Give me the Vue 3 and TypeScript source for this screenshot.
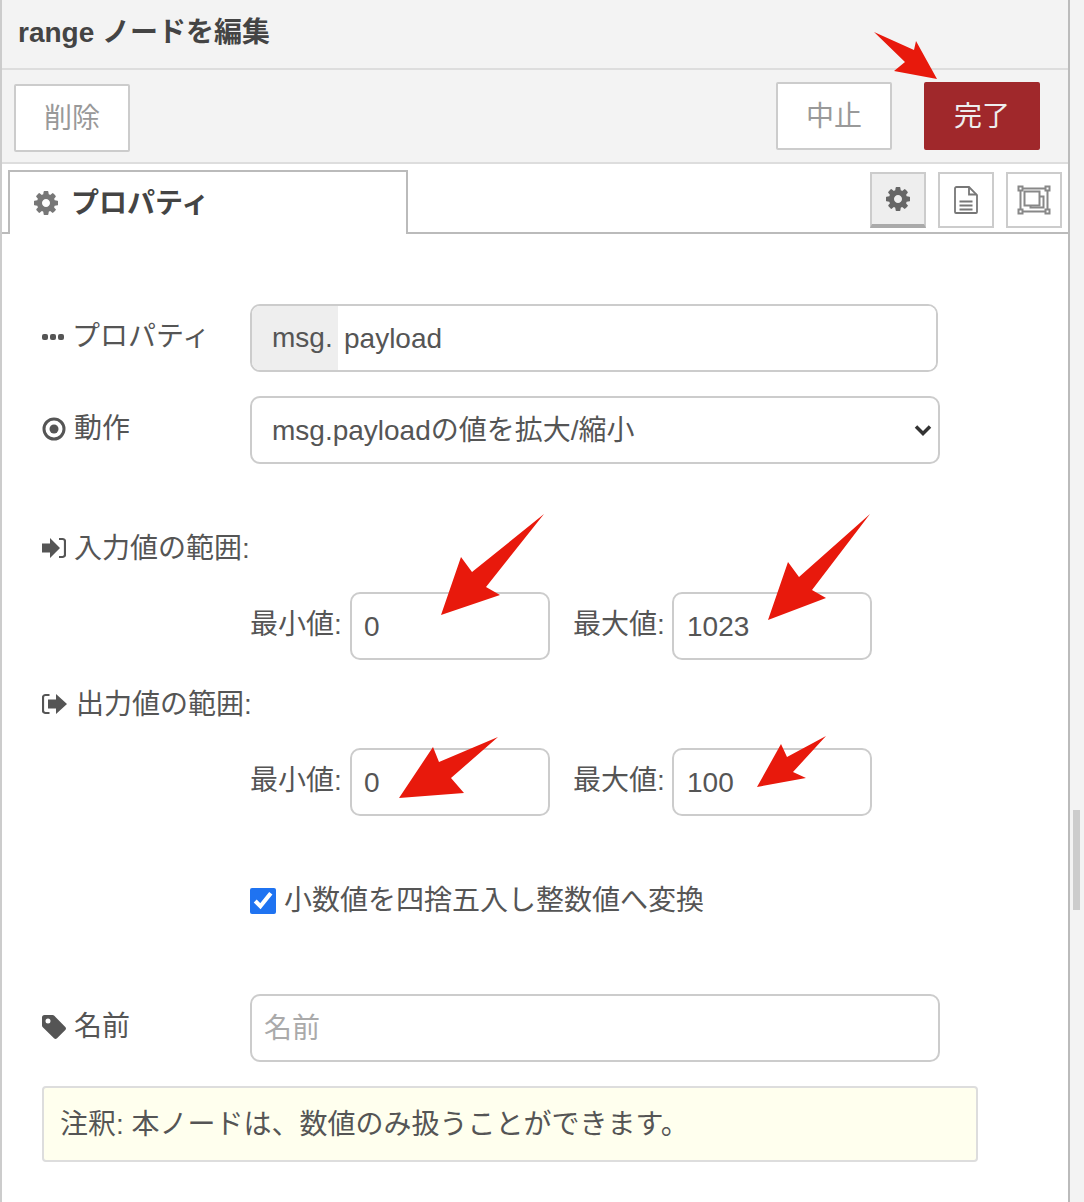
<script setup lang="ts">
const gear = "M1024 768q0-106-75-181t-181-75-181 75-75 181 75 181 181 75 181-75 75-181zm512-109v222q0 12-8 23t-20 13l-185 28q-19 54-39 91 35 50 107 138 10 12 10 25t-9 23q-27 37-99 108t-94 71q-12 0-26-9l-138-108q-44 23-91 38-16 136-29 186-7 28-36 28h-222q-14 0-24.5-8.5t-11.5-21.5l-28-184q-49-16-90-37l-141 107q-10 9-25 9-14 0-25-11-126-114-165-168-7-10-7-23 0-12 8-23 15-21 51-66.5t54-70.5q-27-50-41-99l-183-27q-13-2-21-12.5t-8-23.5v-222q0-12 8-23t19-13l186-28q14-46 39-92-40-57-107-138-10-12-10-24 0-10 9-23 26-36 98.5-107.5t94.5-71.5q13 0 26 10l138 107q44-23 91-38 16-136 29-186 7-28 36-28h222q14 0 24.5 8.5t11.5 21.5l28 184q49 16 90 37l142-107q9-9 24-9 13 0 25 10 129 119 165 170 7 8 7 22 0 12-8 23-15 21-51 66.5t-54 70.5q26 50 41 98l183 28q13 2 21 12.5t8 23.5z";
const arrows: string[] = [
  "874,32 914,50 916,41 937,79 894,71 905,62",
  "544,514 472,572 461,557 441,615 500,595 486,587",
  "870,514 799,577 788,562 768,620 826,598 812,590",
  "498,737 439,762 433,747 399,798 464,793 451,778",
  "826,736 787,757 781,744 757,787 806,778 793,772",
];
</script>

<template>
  <div class="page">
    <div class="panel">
      <header class="title">range ノードを編集</header>
      <div class="toolbar">
        <button class="btn del">削除</button>
        <div class="actions">
          <button class="btn">中止</button>
          <button class="btn primary">完了</button>
        </div>
      </div>
      <div class="tabs">
        <div class="tab">
          <svg class="tab-gear" viewBox="0 0 1536 1536"><path :d="gear" /></svg>
          <span class="tab-text">プロパティ</span>
        </div>
        <div class="tab-btns">
          <div class="tbtn on">
            <svg class="btn-gear" viewBox="0 0 1536 1536"><path :d="gear" /></svg>
          </div>
          <div class="tbtn">
            <svg width="24" height="28" viewBox="0 0 24 28" fill="none" stroke="#777" stroke-width="1.800">
              <path d="M2.500 1H15L23 9V26a1 1 0 0 1-1 1H2a1 1 0 0 1-1-1V2.500A1.500 1.500 0 0 1 2.500 1Z" />
              <path d="M15 1.500V8.500H22.500" />
              <path d="M5.500 15.500H18.500M5.500 19.500H18.500M5.500 23.500H18.500" />
            </svg>
          </div>
          <div class="tbtn">
            <svg width="34" height="30" viewBox="0 0 34 30" fill="none" stroke="#888" stroke-width="2">
              <rect x="1.500" y="1.500" width="4" height="4" />
              <rect x="28.500" y="1.500" width="4" height="4" />
              <rect x="1.500" y="24.500" width="4" height="4" />
              <rect x="28.500" y="24.500" width="4" height="4" />
              <path d="M5.500 3.500H28.500M5.500 26.500H28.500M3.500 5.500V24.500M30.500 5.500V24.500" />
              <rect x="7.500" y="6.500" width="15" height="14" />
              <path d="M22.500 11.500H26.500V22.500H13.500V20.500" />
            </svg>
          </div>
        </div>
      </div>

      <form class="form" @submit.prevent>
        <div class="row">
          <label class="lab">
            <svg class="ic" width="22" height="24" viewBox="0 0 22 24" fill="#555">
              <rect x="0" y="9" width="6" height="6" rx="2" />
              <rect x="8" y="9" width="6" height="6" rx="2" />
              <rect x="16" y="9" width="6" height="6" rx="2" />
            </svg>
            <span>プロパティ</span>
          </label>
          <div class="typed">
            <span class="prefix">msg.</span>
            <input class="typed-in" value="payload" />
          </div>
        </div>

        <div class="row gap24">
          <label class="lab">
            <svg class="ic" width="24" height="24" viewBox="0 0 24 24">
              <circle cx="12" cy="12" r="10" fill="none" stroke="#555" stroke-width="3" />
              <circle cx="12" cy="12" r="4.500" fill="#555" />
            </svg>
            <span>動作</span>
          </label>
          <div class="select-wrap">
            <select class="select">
              <option>msg.payloadの値を拡大/縮小</option>
            </select>
            <svg class="chev" width="18" height="12" viewBox="0 0 18 12" fill="none" stroke="#333" stroke-width="3.500">
              <path d="M2 2.500L9 9.500L16 2.500" />
            </svg>
          </div>
        </div>

        <div class="head gap64">
          <svg class="ic" width="24" height="24" viewBox="0 0 24 24" fill="#555">
            <path d="M0 7.500H8V2L18 12L8 22V16.500H0Z" />
            <path d="M17 3H20.500a2.500 2.500 0 0 1 2.500 2.500V18.500a2.500 2.500 0 0 1-2.500 2.500H17" fill="none" stroke="#555" stroke-width="2.200" />
          </svg>
          <span>入力値の範囲:</span>
        </div>
        <div class="pair gap24">
          <span class="mini">最小値:</span>
          <input class="num" value="0" />
          <span class="mini second">最大値:</span>
          <input class="num right" value="1023" />
        </div>

        <div class="head gap24">
          <svg class="ic out" width="26" height="24" viewBox="0 0 26 24" fill="#555">
            <path d="M7.500 3H3.500A2.500 2.500 0 0 0 1 5.500V18.500A2.500 2.500 0 0 0 3.500 21H7.500" fill="none" stroke="#555" stroke-width="2.200" />
            <path d="M6 7.500H14V2L25 12L14 22V16.500H6Z" />
          </svg>
          <span>出力値の範囲:</span>
        </div>
        <div class="pair gap24">
          <span class="mini">最小値:</span>
          <input class="num" value="0" />
          <span class="mini second">最大値:</span>
          <input class="num right" value="100" />
        </div>

        <label class="check gap64">
          <input class="cb" type="checkbox" checked />
          <span>小数値を四捨五入し整数値へ変換</span>
        </label>

        <div class="row gap74">
          <label class="lab">
            <svg class="ic" width="24" height="24" viewBox="0 0 24 24" fill="#555">
              <path fill-rule="evenodd" d="M2.500 0H10.500a2.500 2.500 0 0 1 1.800.8L23.300 12a2.200 2.200 0 0 1 0 3L15 23.300a2.200 2.200 0 0 1-3 0L.8 12.300A2.500 2.500 0 0 1 0 10.500V2.500A2.500 2.500 0 0 1 2.500 0ZM6 3.500a2.500 2.500 0 1 0 0 5a2.500 2.500 0 0 0 0-5Z" />
            </svg>
            <span>名前</span>
          </label>
          <input class="name" placeholder="名前" />
        </div>

        <div class="tip">注釈: 本ノードは、数値のみ扱うことができます。</div>
      </form>
    </div>
    <div class="rail"><div class="thumb"></div></div>
    <svg class="arrows" width="1084" height="1202" viewBox="0 0 1084 1202">
      <polygon v-for="p in arrows" :key="p" :points="p" fill="#e8190c" />
    </svg>
  </div>
</template>

<style>
html, body { margin: 0; background: #fff; }
</style>

<style scoped>
.page {
  position: relative;
  width: 1084px;
  height: 1202px;
  display: flex;
  overflow: hidden;
  background: #f3f3f3;
  color: #555;
  font-family: "Liberation Sans", "Noto Sans CJK JP", sans-serif;
  font-size: 28px;
}
.panel {
  width: 1070px;
  box-sizing: border-box;
  border-left: 2px solid #ccc;
  border-right: 2px solid #bbb;
  background: #fff;
  display: flex;
  flex-direction: column;
}
.title {
  height: 70px;
  box-sizing: border-box;
  padding: 13px 0 0 16px;
  line-height: 40px;
  background: #f3f3f3;
  border-bottom: 2px solid #ddd;
  font-weight: 700;
  color: #444;
}
.toolbar {
  height: 94px;
  box-sizing: border-box;
  background: #f3f3f3;
  border-bottom: 2px solid #ddd;
  display: flex;
  justify-content: space-between;
  padding: 12px 28px 0 12px;
}
.actions { display: flex; gap: 32px; }
.btn {
  width: 116px;
  height: 68px;
  box-sizing: border-box;
  border: 2px solid #ccc;
  border-radius: 2px;
  background: #fff;
  color: #999;
  font: inherit;
  padding: 0 0 4px;
}
.del { margin-top: 2px; }
.primary {
  background: #a0282b;
  border-color: #a0282b;
  color: #eee;
}
.tabs {
  height: 70px;
  box-sizing: border-box;
  border-bottom: 2px solid #bbb;
  display: flex;
  justify-content: space-between;
  padding: 6px 6px 0 6px;
}
.tab {
  width: 400px;
  height: 64px;
  box-sizing: border-box;
  border: 2px solid #bbb;
  border-bottom: 0;
  background: #fff;
  display: flex;
  align-items: center;
  padding-left: 24px;
  gap: 13px;
  font-weight: 700;
  color: #444;
}
.tab-text { margin-top: -4px; }
.tab-gear { width: 24px; height: 24px; fill: #777; margin-top: -1px; }
.tab-btns { display: flex; gap: 12px; padding-top: 2px; }
.tbtn {
  width: 56px;
  height: 56px;
  box-sizing: border-box;
  border: 2px solid #ccc;
  background: #fff;
  display: flex;
  align-items: center;
  justify-content: center;
}
.tbtn.on {
  background: #eee;
  border-bottom: 4px solid #aaa;
}
.btn-gear { width: 24px; height: 24px; fill: #666; }

.form {
  padding: 70px 0 0 40px;
  display: flex;
  flex-direction: column;
  background: #fff;
  flex: 1;
}
.gap24 { margin-top: 24px; }
.gap64 { margin-top: 64px; }
.gap74 { margin-top: 74px; }
.row { display: flex; align-items: center; height: 68px; }
.lab {
  width: 208px;
  display: flex;
  align-items: center;
  line-height: 40px;
  margin-top: -2px;
}
.ic { flex: none; margin-right: 8px; }
.typed {
  width: 688px;
  height: 68px;
  box-sizing: border-box;
  border: 2px solid #ccc;
  border-radius: 10px;
  display: flex;
  overflow: hidden;
}
.prefix {
  width: 86px;
  flex: none;
  background: #eee;
  color: #555;
  box-sizing: border-box;
  padding-left: 20px;
  line-height: 64px;
}
.typed-in {
  flex: 1;
  min-width: 0;
  border: 0;
  outline: 0;
  padding: 2px 0 0 6px;
  font: inherit;
  color: #555;
}
.select-wrap { position: relative; width: 690px; height: 68px; }
.select {
  width: 100%;
  height: 100%;
  box-sizing: border-box;
  appearance: none;
  border: 2px solid #ccc;
  border-radius: 10px;
  background: #fff;
  padding: 0 0 0 20px;
  font: inherit;
  color: #555;
  outline: 0;
}
.chev { position: absolute; right: 8px; top: 28px; }
.head {
  height: 40px;
  line-height: 40px;
  display: flex;
  align-items: center;
}
.head span { padding-top: 2px; }
.pair {
  display: flex;
  align-items: center;
  height: 68px;
  padding-left: 208px;
}
.mini { width: 100px; line-height: 40px; margin-top: -2px; white-space: nowrap; }
.mini.second { width: 99px; margin-left: 23px; }
.num {
  width: 200px;
  height: 68px;
  box-sizing: border-box;
  border: 2px solid #ccc;
  border-radius: 10px;
  padding: 2px 0 0 12px;
  font: inherit;
  color: #555;
  outline: 0;
}
.num.right { padding-left: 13px; }
.check {
  height: 40px;
  line-height: 40px;
  display: flex;
  align-items: center;
  padding-left: 208px;
  gap: 8px;
}
.check span { padding-top: 2px; }
.cb {
  width: 26px;
  height: 26px;
  margin: 2px 0 0;
  accent-color: #1f73f1;
}
.name {
  width: 690px;
  height: 68px;
  box-sizing: border-box;
  border: 2px solid #ccc;
  border-radius: 10px;
  padding: 2px 0 0 12px;
  font: inherit;
  color: #555;
  outline: 0;
}
.name::placeholder { color: #aaa; opacity: 1; }
.tip {
  margin-top: 24px;
  width: 936px;
  height: 76px;
  box-sizing: border-box;
  border: 2px solid #ddd;
  border-radius: 4px;
  background: #ffffee;
  padding: 0 16px;
  line-height: 74px;
}
.rail { flex: 1; position: relative; }
.thumb {
  position: absolute;
  left: 3px;
  top: 810px;
  width: 7px;
  height: 100px;
  background: #ccc;
}
.arrows { position: absolute; left: 0; top: 0; pointer-events: none; }
</style>
